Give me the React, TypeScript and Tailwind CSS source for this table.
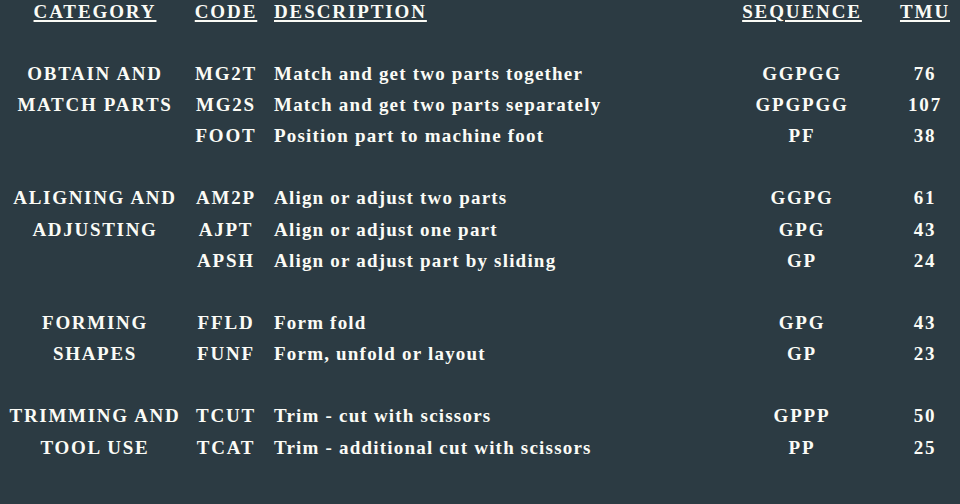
import React from 'react';

type Row = {
  category?: string;
  code?: string;
  description?: string;
  sequence?: string;
  tmu?: string;
};

const rows: Row[] = [
  {},
  { category: 'OBTAIN AND', code: 'MG2T', description: 'Match and get two parts together', sequence: 'GGPGG', tmu: '76' },
  { category: 'MATCH PARTS', code: 'MG2S', description: 'Match and get two parts separately', sequence: 'GPGPGG', tmu: '107' },
  { code: 'FOOT', description: 'Position part to machine foot', sequence: 'PF', tmu: '38' },
  {},
  { category: 'ALIGNING AND', code: 'AM2P', description: 'Align or adjust two parts', sequence: 'GGPG', tmu: '61' },
  { category: 'ADJUSTING', code: 'AJPT', description: 'Align or adjust one part', sequence: 'GPG', tmu: '43' },
  { code: 'APSH', description: 'Align or adjust part by sliding', sequence: 'GP', tmu: '24' },
  {},
  { category: 'FORMING', code: 'FFLD', description: 'Form fold', sequence: 'GPG', tmu: '43' },
  { category: 'SHAPES', code: 'FUNF', description: 'Form, unfold or layout', sequence: 'GP', tmu: '23' },
  {},
  { category: 'TRIMMING AND', code: 'TCUT', description: 'Trim - cut with scissors', sequence: 'GPPP', tmu: '50' },
  { category: 'TOOL USE', code: 'TCAT', description: 'Trim - additional cut with scissors', sequence: 'PP', tmu: '25' },
  {},
];

const rowCls = 'grid grid-cols-[190px_72px_480px_120px_1fr] h-[31.15px] items-center whitespace-nowrap';

export default function App() {
  return (
    <div className="w-[960px] h-[504px] overflow-hidden bg-[#2c3b43] text-[#fbfbf6] font-['Liberation_Serif',serif] font-bold text-[19px] leading-none">
      <div className="-mt-[4.5px]">
        {/* Header */}
        <div className={rowCls}>
          <div className="text-center tracking-[1.9px] underline decoration-[1.5px] underline-offset-[2px]">CATEGORY</div>
          <div className="text-center tracking-[1.9px] underline decoration-[1.5px] underline-offset-[2px]">CODE</div>
          <div className="pl-3 tracking-[1.9px]">
            <span className="underline decoration-[1.5px] underline-offset-[2px]">DESCRIPTION</span>
          </div>
          <div className="text-center tracking-[1.9px] underline decoration-[1.5px] underline-offset-[2px]">SEQUENCE</div>
          <div className="text-center pl-7 tracking-[1.9px]">
            <span className="underline decoration-[1.5px] underline-offset-[2px]">TMU</span>
          </div>
        </div>

        {rows.map((r, i) => (
          <div key={i} className={rowCls}>
            <div className="text-center tracking-[1.7px]">{r.category}</div>
            <div className="text-center tracking-[1.8px]">{r.code}</div>
            <div className="pl-3 tracking-[1.2px]">{r.description}</div>
            <div className="text-center tracking-[1.8px]">{r.sequence}</div>
            <div className="text-center pl-7 tracking-[1.8px]">{r.tmu}</div>
          </div>
        ))}
      </div>
    </div>
  );
}
